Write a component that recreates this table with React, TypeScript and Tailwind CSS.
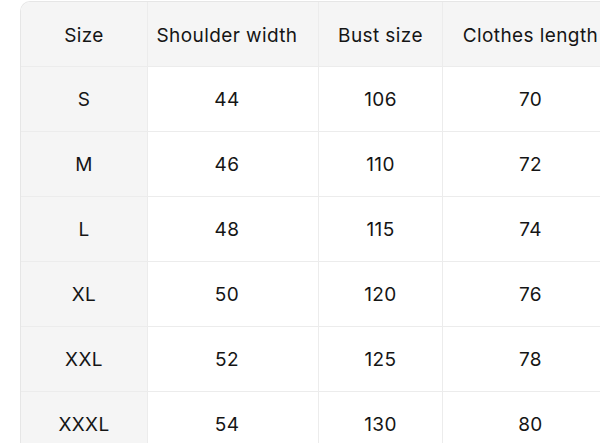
const headers = ["Size", "Shoulder width", "Bust size", "Clothes length"];

const rows = [
  ["S", "44", "106", "70"],
  ["M", "46", "110", "72"],
  ["L", "48", "115", "74"],
  ["XL", "50", "120", "76"],
  ["XXL", "52", "125", "78"],
  ["XXXL", "54", "130", "80"],
];

// second column's text sits a little left of centre in the original
const pad = ["", "pr-[12px]", "", ""];

export default function App() {
  return (
    <div className="h-[443px] w-[600px] overflow-hidden bg-white pl-[20px] pt-[1px] font-['Inter',sans-serif] text-[19px] tracking-[0.4px] text-[#151515]">
      <div className="w-[600px] overflow-hidden rounded-tl-[10px] border-l border-t border-[#e6e6e6]">
        <div className="grid grid-cols-[127px_171px_124px_176px]">
          {headers.map((h, i) => (
            <div
              key={h}
              className={`flex h-[65px] items-center justify-center whitespace-nowrap border-b border-r border-[#ececec] bg-[#f5f5f5] pt-[4px] ${pad[i]}`}
            >
              {h}
            </div>
          ))}
          {rows.map((r) =>
            r.map((c, i) => (
              <div
                key={r[0] + i}
                className={`flex h-[65px] items-center justify-center border-b border-r border-[#ececec] pt-[2px] ${pad[i]} ${
                  i === 0 ? "bg-[#f5f5f5]" : "bg-white"
                }`}
              >
                {c}
              </div>
            ))
          )}
        </div>
      </div>
    </div>
  );
}
